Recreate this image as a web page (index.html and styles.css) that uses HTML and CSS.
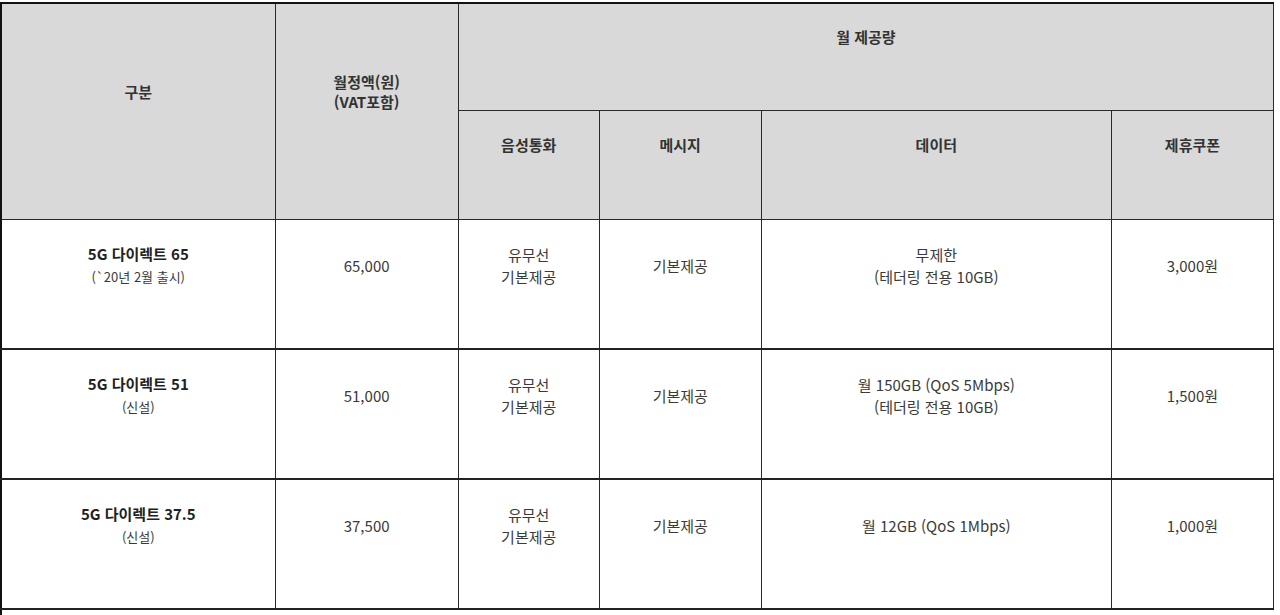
FILE: index.html
```html
<!DOCTYPE html>
<html lang="ko">
<head>
<meta charset="utf-8">
<title>5G 다이렉트 요금제</title>
<link rel="stylesheet" href="styles.css">
</head>
<body>
<table class="plan">
  <colgroup>
    <col class="c1"><col class="c2"><col class="c3"><col class="c4"><col class="c5"><col class="c6">
  </colgroup>
  <thead>
    <tr class="h1">
      <th rowspan="2">구분</th>
      <th rowspan="2">월정액(원)<br>(VAT포함)</th>
      <th colspan="4">월 제공량</th>
    </tr>
    <tr class="h2">
      <th>음성통화</th>
      <th>메시지</th>
      <th>데이터</th>
      <th>제휴쿠폰</th>
    </tr>
  </thead>
  <tbody>
    <tr>
      <td><b>5G 다이렉트 65</b><br><span class="sub">(`20년 2월 출시)</span></td>
      <td>65,000</td>
      <td>유무선<br>기본제공</td>
      <td>기본제공</td>
      <td>무제한<br>(테더링 전용 10GB)</td>
      <td>3,000원</td>
    </tr>
    <tr>
      <td><b>5G 다이렉트 51</b><br><span class="sub">(신설)</span></td>
      <td>51,000</td>
      <td>유무선<br>기본제공</td>
      <td>기본제공</td>
      <td>월 150GB (QoS 5Mbps)<br>(테더링 전용 10GB)</td>
      <td>1,500원</td>
    </tr>
    <tr>
      <td><b>5G 다이렉트 37.5</b><br><span class="sub">(신설)</span></td>
      <td>37,500</td>
      <td>유무선<br>기본제공</td>
      <td>기본제공</td>
      <td>월 12GB (QoS 1Mbps)</td>
      <td>1,000원</td>
    </tr>
    <tr class="cut">
      <td colspan="6"></td>
    </tr>
  </tbody>
</table>
</body>
</html>
```

FILE: styles.css
```css
html, body {
  margin: 0;
  padding: 0;
  background: #ffffff;
}
body {
  padding-top: 2px;
  font-family: "Noto Sans CJK KR", "Noto Sans", sans-serif;
  color: #3a3a3a;
  overflow: hidden;
}
.plan {
  border-collapse: collapse;
  table-layout: fixed;
  width: 1274px;
  border-left: 2px solid #111;
  border-top: 2px solid #111;
}
.c1 { width: 274px; }
.c2 { width: 183px; }
.c3 { width: 141px; }
.c4 { width: 162px; }
.c5 { width: 350px; }
.c6 { width: 162px; }

.plan th,
.plan td {
  border: 1px solid #2a2a2a;
  text-align: center;
  vertical-align: middle;
  padding: 0 0 40px 0;
  font-size: 15px;
}
.plan th {
  background: #d9d9d9;
  font-weight: 600;
  line-height: 20px;
  color: #333;
}
.h1 th { height: 66px; }
.h2 th { height: 68px; }
.plan tbody td {
  height: 91px;
  padding-bottom: 37px;
  line-height: 22px;
  font-weight: 400;
}
.plan tbody tr { border-bottom: 2px solid #222; }
.plan td b {
  font-weight: 700;
  color: #222;
}
.sub {
  font-size: 13px;
}
.plan tr.cut td {
  height: 20px;
  padding: 0;
  border-bottom: none;
  border-right: none;
}
```
